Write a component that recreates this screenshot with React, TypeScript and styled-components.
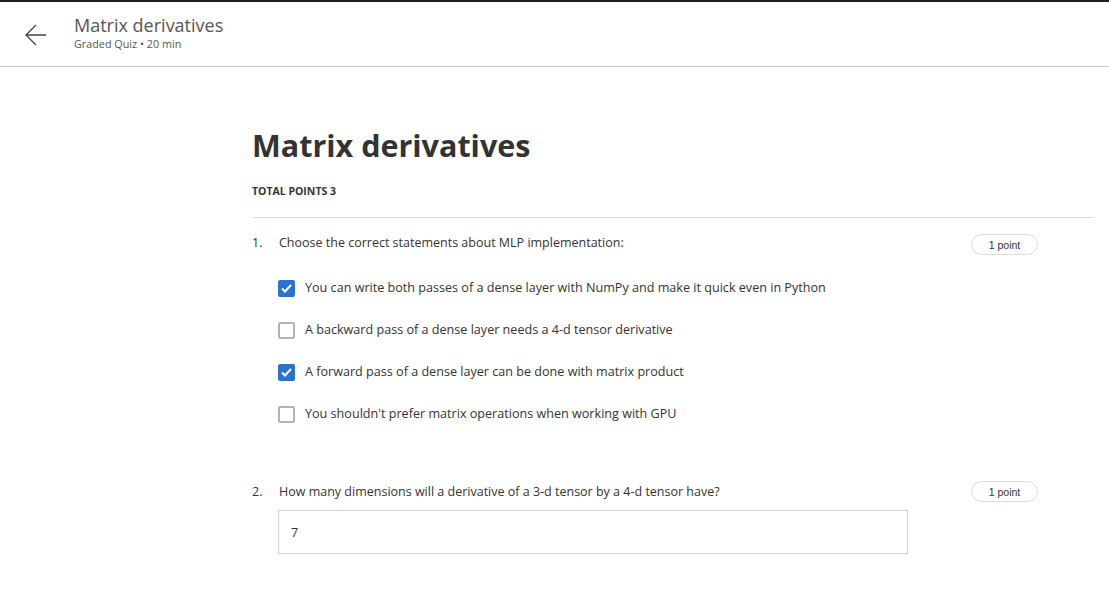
import React from "react";
import styled, { createGlobalStyle } from "styled-components";

const Global = createGlobalStyle`
  html, body { margin: 0; padding: 0; background: #fff; }
  body { font-family: "Open Sans", "Noto Sans", sans-serif; color: #333; }
  * { box-sizing: border-box; }
`;

const Page = styled.div`
  width: 1109px;
  min-height: 589px;
  border-top: 2px solid #1f1f1f;
  background: #fff;
`;

const Header = styled.header`
  height: 65px;
  border-bottom: 1px solid #c8c8c8;
  display: flex;
  align-items: flex-start;
  padding: 12px 0 0 24px;
`;

const BackButton = styled.button`
  width: 24px;
  height: 24px;
  margin-top: 9px;
  margin-right: 26px;
  padding: 0;
  border: 0;
  background: none;
  display: flex;
  align-items: center;
  justify-content: center;
  color: #444;
`;

const HeaderText = styled.div`
  display: flex;
  flex-direction: column;
`;

const HeaderTitle = styled.div`
  font-size: 18px;
  line-height: 22px;
  color: #555;
`;

const HeaderSub = styled.div`
  font-size: 10.8px;
  line-height: 16px;
  color: #555;
`;

const Main = styled.main`
  padding: 56px 15px 0 252px;
`;

const Title = styled.h1`
  margin: 0;
  font-size: 30.5px;
  line-height: 44px;
  font-weight: 700;
  color: #333;
`;

const TotalPoints = styled.div`
  margin-top: 17px;
  font-size: 10.5px;
  line-height: 14px;
  font-weight: 700;
  color: #333;
  padding-bottom: 19px;
  border-bottom: 1px solid #dcdcdc;
`;

const Question = styled.section<{ $gap: number }>`
  margin-top: ${(p) => p.$gap}px;
  padding-right: 56px;
`;

const QuestionHead = styled.div`
  display: flex;
  align-items: flex-start;
  font-size: 12.5px;
  line-height: 18px;
  color: #333;
`;

const Num = styled.span`
  width: 27px;
  flex: none;
`;

const QText = styled.span`
  flex: 1;
`;

const Pill = styled.span<{ $offset: number }>`
  flex: none;
  width: 67px;
  height: 21px;
  margin-top: ${(p) => p.$offset}px;
  border: 1px solid #dadada;
  border-radius: 11px;
  font-family: "Liberation Sans", Arial, sans-serif;
  font-size: 10.5px;
  color: #333;
  display: flex;
  align-items: center;
  justify-content: center;
`;

const Options = styled.div`
  margin: 24px 0 0 26px;
  display: flex;
  flex-direction: column;
  gap: 24px;
`;

const Option = styled.label`
  display: flex;
  align-items: center;
  gap: 10px;
  font-size: 12.6px;
  line-height: 18px;
  color: #333;
`;

const Box = styled.span<{ $checked: boolean }>`
  width: 17px;
  height: 17px;
  flex: none;
  border-radius: 2px;
  border: ${(p) => (p.$checked ? "none" : "2px solid #b3b3b3")};
  background: ${(p) => (p.$checked ? "#2a73cc" : "#fff")};
  display: flex;
  align-items: center;
  justify-content: center;
`;

const AnswerBox = styled.div`
  margin: 8px 0 0 26px;
  width: 630px;
  height: 44px;
  border: 1px solid #cfcfd6;
  padding: 0 12px;
  display: flex;
  align-items: center;
  font-size: 12.5px;
  color: #333;
`;

const options = [
  { text: "You can write both passes of a dense layer with NumPy and make it quick even in Python", checked: true },
  { text: "A backward pass of a dense layer needs a 4-d tensor derivative", checked: false },
  { text: "A forward pass of a dense layer can be done with matrix product", checked: true },
  { text: "You shouldn't prefer matrix operations when working with GPU", checked: false },
];

export default function App() {
  return (
    <Page>
      <Global />
      <Header>
        <BackButton aria-label="Back">
          <svg width="24" height="24" viewBox="0 0 24 24" fill="none" stroke="#444" strokeWidth="1.3">
            <path d="M22 12H2M12 2L2 12l10 10" />
          </svg>
        </BackButton>
        <HeaderText>
          <HeaderTitle>Matrix derivatives</HeaderTitle>
          <HeaderSub>Graded Quiz • 20 min</HeaderSub>
        </HeaderText>
      </Header>
      <Main>
        <Title>Matrix derivatives</Title>
        <TotalPoints>TOTAL POINTS 3</TotalPoints>
        <Question $gap={16}>
          <QuestionHead>
            <Num>1.</Num>
            <QText>Choose the correct statements about MLP implementation:</QText>
            <Pill $offset={0}>1 point</Pill>
          </QuestionHead>
          <Options>
            {options.map((o) => (
              <Option key={o.text}>
                <Box $checked={o.checked}>
                  {o.checked && (
                    <svg width="13" height="13" viewBox="0 0 13 13" fill="none" stroke="#fff" strokeWidth="2">
                      <path d="M2 6.5l3 3 6-6.5" />
                    </svg>
                  )}
                </Box>
                {o.text}
              </Option>
            ))}
          </Options>
        </Question>
        <Question $gap={60}>
          <QuestionHead>
            <Num>2.</Num>
            <QText>How many dimensions will a derivative of a 3-d tensor by a 4-d tensor have?</QText>
            <Pill $offset={-2}>1 point</Pill>
          </QuestionHead>
          <AnswerBox>7</AnswerBox>
        </Question>
      </Main>
    </Page>
  );
}
